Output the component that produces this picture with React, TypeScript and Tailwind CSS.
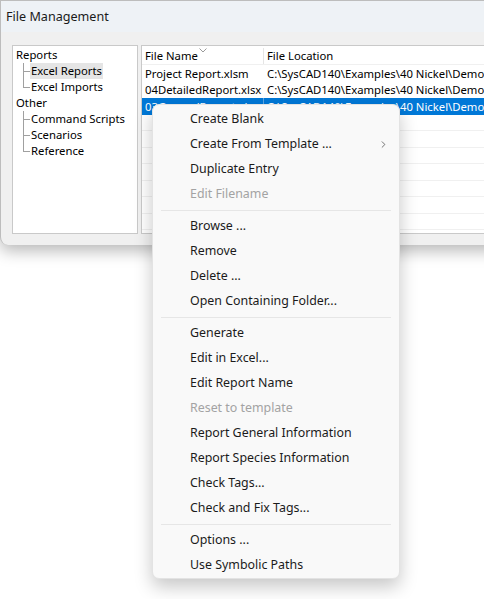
import { ChevronRight } from "lucide-react";

type MenuEntry = { label: string; disabled?: boolean; sub?: boolean } | "sep";

const menu: MenuEntry[] = [
  { label: "Create Blank" },
  { label: "Create From Template ...", sub: true },
  { label: "Duplicate Entry" },
  { label: "Edit Filename", disabled: true },
  "sep",
  { label: "Browse ..." },
  { label: "Remove" },
  { label: "Delete ..." },
  { label: "Open Containing Folder..." },
  "sep",
  { label: "Generate" },
  { label: "Edit in Excel..." },
  { label: "Edit Report Name" },
  { label: "Reset to template", disabled: true },
  { label: "Report General Information" },
  { label: "Report Species Information" },
  { label: "Check Tags..." },
  { label: "Check and Fix Tags..." },
  "sep",
  { label: "Options ..." },
  { label: "Use Symbolic Paths" },
];

const tree = [
  { label: "Reports", child: false },
  { label: "Excel Reports", child: true, selected: true, last: false },
  { label: "Excel Imports", child: true, last: true },
  { label: "Other", child: false },
  { label: "Command Scripts", child: true, last: false },
  { label: "Scenarios", child: true, last: false },
  { label: "Reference", child: true, last: true },
];

const files = [
  { name: "Project Report.xlsm", loc: "C:\\SysCAD140\\Examples\\40 Nickel\\Demo Nickel Project.spf" },
  { name: "04DetailedReport.xlsx", loc: "C:\\SysCAD140\\Examples\\40 Nickel\\Demo Nickel Project.spf" },
  { name: "03GeneralReport.xlsx", loc: "C:\\SysCAD140\\Examples\\40 Nickel\\Demo Nickel Project.spf", selected: true },
];

function TreePanel() {
  return (
    <div className="w-[126px] h-[189px] bg-white border border-[#c9c9c9] pt-[1px] pl-[1px]">
      {tree.map((t) => (
        <div key={t.label} className="h-[16px] flex items-center relative">
          {t.child && (
            <>
              <div className={`absolute left-[9px] top-0 w-px bg-[#a0a0a0] ${t.last ? "h-[8px]" : "h-[16px]"}`} />
              <div className="absolute left-[9px] top-[8px] w-[7px] h-px bg-[#a0a0a0]" />
            </>
          )}
          <span
            className={`${t.child ? "ml-[16px]" : "ml-[1px]"} px-[1px] leading-[16px] ${
              t.selected ? "bg-[#e5e5e5]" : ""
            }`}
          >
            {t.label}
          </span>
        </div>
      ))}
    </div>
  );
}

function FileList() {
  const empty = Array.from({ length: 8 });
  return (
    <div className="flex-1 h-[189px] bg-white border border-[#c9c9c9] overflow-hidden">
      <div className="h-[19px] flex items-center border-b border-[#f0f0f0] pt-[2px]">
        <div className="w-[122px] shrink-0 pl-[3px] relative h-full flex items-center border-r border-[#e5e5e5]">
          File Name
          <svg className="absolute left-[57px] top-[0px]" width="8" height="5" viewBox="0 0 8 5">
            <path d="M0.5 0.5 L4 4 L7.5 0.5" fill="none" stroke="#9a9a9a" strokeWidth="1" />
          </svg>
        </div>
        <div className="pl-[3px] whitespace-nowrap">File Location</div>
      </div>
      {files.map((f) => (
        <div
          key={f.name}
          className={`h-[16.5px] flex items-center whitespace-nowrap ${
            f.selected ? "bg-[#0078d7] text-white" : ""
          }`}
        >
          <div className={`w-[122px] shrink-0 pl-[3px] h-full flex items-center overflow-hidden ${f.selected ? "border-r border-[#5ea6e3]" : ""}`}>
            {f.name}
          </div>
          <div className="pl-[3px]">{f.loc}</div>
        </div>
      ))}
      {empty.map((_, i) => (
        <div key={i} className="h-[16.5px] border-b border-[#f0f0f0]" />
      ))}
    </div>
  );
}

function ContextMenu() {
  return (
    <div className="absolute left-[152px] top-[104px] w-[248px] bg-[#f9f9f9] rounded-[7px] border border-[#e3e3e3] shadow-[0_8px_18px_rgba(0,0,0,0.22)] pt-[2px] text-[12.4px] text-[#1b1b1b]">
      {menu.map((m, i) =>
        m === "sep" ? (
          <div key={i} className="h-[7px] flex items-center px-[8px]">
            <div className="h-px w-full bg-[#e6e6e6]" />
          </div>
        ) : (
          <div key={i} className="h-[25px] flex items-center pl-[37px] pr-[12px] relative">
            <span className={m.disabled ? "text-[#a3a3a3]" : ""}>{m.label}</span>
            {m.sub && (
              <ChevronRight size={11} strokeWidth={1.6} className="absolute right-[10px] top-[7px] text-[#444]" />
            )}
          </div>
        )
      )}
    </div>
  );
}

export default function App() {
  return (
    <div
      className="w-[484px] h-[599px] relative overflow-hidden bg-white"
      style={{ fontFamily: "'Noto Sans', 'Open Sans', sans-serif" }}
    >
      <div className="w-[520px] h-[245px] bg-[#f0f0f0] rounded-bl-[8px] border-t border-l border-[#bdbdbd] shadow-[0_6px_16px_rgba(0,0,0,0.28)]">
        <div className="h-[31px] bg-[#eef2f6] flex items-center pl-[5px] pt-[2px] text-[12.6px] text-[#1a1a1a]">
          File Management
        </div>
        <div className="flex gap-[3px] pt-[13px] pl-[11px] text-[11.3px] text-black leading-none">
          <TreePanel />
          <FileList />
        </div>
      </div>
      <ContextMenu />
    </div>
  );
}
